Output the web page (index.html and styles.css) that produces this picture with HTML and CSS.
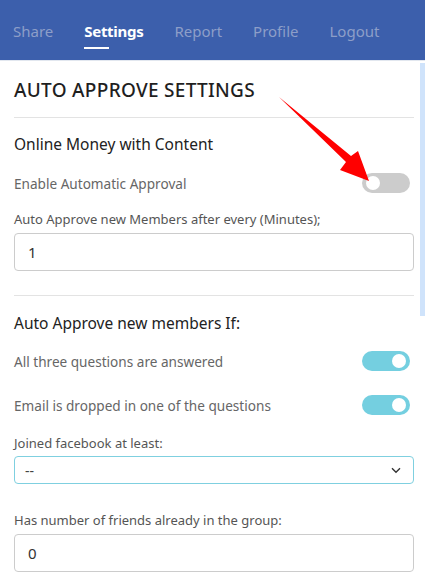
FILE: index.html
```html
<!DOCTYPE html>
<html lang="en">
<head>
	<meta charset="UTF-8">
	<title>Auto Approve Settings</title>
	<link rel="stylesheet" href="styles.css">
</head>
<body>
	<nav class="nav">
		<a class="nav-item">Share</a>
		<a class="nav-item active">Settings</a>
		<a class="nav-item">Report</a>
		<a class="nav-item">Profile</a>
		<a class="nav-item">Logout</a>
	</nav>
	<div class="main">
		<div class="panel">
			<h2 class="title">AUTO APPROVE SETTINGS</h2>
			<hr class="divider first">
			<h3 class="sub first">Online Money with Content</h3>
			<div class="row r-enable">
				<span>Enable Automatic Approval</span>
				<span class="toggle"><i></i></span>
			</div>
			<label class="field-label l-minutes">Auto Approve new Members after every (Minutes);</label>
			<div class="input">1</div>
			<hr class="divider second">
			<h3 class="sub second">Auto Approve new members If:</h3>
			<div class="row r-three">
				<span>All three questions are answered</span>
				<span class="toggle on"><i></i></span>
			</div>
			<div class="row r-email">
				<span>Email is dropped in one of the questions</span>
				<span class="toggle on"><i></i></span>
			</div>
			<label class="field-label l-joined">Joined facebook at least:</label>
			<div class="select">
				<span>--</span>
				<svg width="10" height="7" viewBox="0 0 10 7"><path d="M1 1.2 L5 5.2 L9 1.2" fill="none" stroke="#333" stroke-width="1.4"/></svg>
			</div>
			<label class="field-label l-friends">Has number of friends already in the group:</label>
			<div class="input">0</div>
		</div>
		<div class="scrollbar"></div>
		<svg class="arrow" width="100" height="90" viewBox="275 95 100 90">
			<polygon points="279,97 351,156 358,151 369,181 340,170 346,162" fill="#ff0000"/>
		</svg>
	</div>
</body>
</html>
```

FILE: styles.css
```css
* {margin:0; padding:0; box-sizing:border-box;}
body {width:425px; height:579px; overflow:hidden; background:#fff; font-family:"Noto Sans","Open Sans",Arial,sans-serif; color:#222;}

.nav {height:61px; background:#3c5fac; border-bottom:1px solid #e2e7ef; display:flex; align-items:flex-start; padding-left:13px; gap:31px;}
.nav-item {font-size:15px; line-height:22px; margin-top:20px; color:#8d9ec8; position:relative;}
.nav-item.active {color:#fff; font-weight:bold; letter-spacing:-0.3px;}
.nav-item.active:after {content:""; position:absolute; left:0; top:27px; width:25px; height:2px; background:#fff;}

.main {position:relative; height:518px; overflow:hidden;}
.panel {padding:17px 11px 0 14px;}
.scrollbar {position:absolute; right:0; top:2px; width:5px; height:253px; background:#cfe3fb;}
.arrow {position:absolute; left:275px; top:34px;}

.title {font-size:19px; line-height:24px; font-weight:500; color:#1f1f1f; letter-spacing:0.3px;}
.divider {border:0; border-top:1px solid #e3e3e3;}
.divider.first {margin-top:15px;}
.divider.second {margin-top:24px;}

.sub {font-size:15.5px; line-height:20px; font-weight:normal; color:#222;}
.sub.first {margin-top:16px;}
.sub.second {margin-top:17px;}

.row {display:flex; justify-content:space-between; align-items:center; height:20px; font-size:13.6px; color:#666; padding-right:4px;}
.r-enable {margin-top:19px;}
.r-three {margin-top:18px;}
.r-email {margin-top:24px;}

.toggle {width:48px; height:20px; border-radius:10px; background:#cccccc; position:relative;}
.toggle i {position:absolute; top:3px; left:4px; width:14px; height:14px; border-radius:50%; background:#fff;}
.toggle.on {background:#74cfe0;}
.toggle.on i {left:auto; right:4px;}

.field-label {display:block; font-size:13px; line-height:18px; color:#555;}
.l-minutes {margin-top:17px;}
.l-joined {margin-top:19px;}
.l-friends {margin-top:27px;}

.input {margin-top:5px; height:38px; border:1px solid #cccccc; border-radius:4px; padding-left:13px; font-size:15px; line-height:36px; color:#333;}
.select {margin-top:4px; height:28px; border:1px solid #7fd0e0; border-radius:4px; padding:0 12px 0 10px; display:flex; justify-content:space-between; align-items:center; font-size:14px; color:#444;}
```
